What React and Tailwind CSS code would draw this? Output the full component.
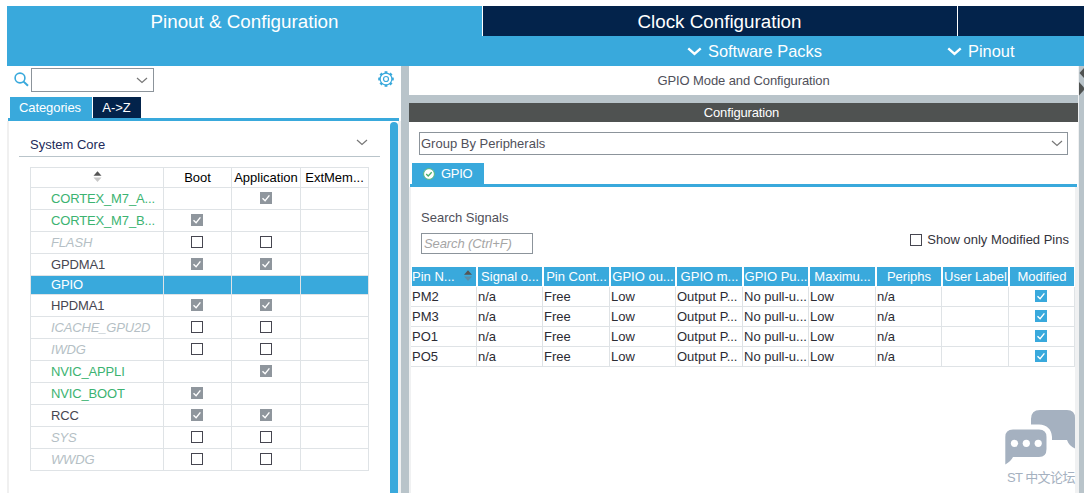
import clsx from "clsx";

const modules = [
  { name: "CORTEX_M7_A...", tone: "active", boot: null, app: true },
  { name: "CORTEX_M7_B...", tone: "active", boot: true, app: null },
  { name: "FLASH", tone: "disabled", boot: false, app: false },
  { name: "GPDMA1", tone: "normal", boot: true, app: true },
  { name: "GPIO", tone: "selected", boot: null, app: null },
  { name: "HPDMA1", tone: "normal", boot: true, app: true },
  { name: "ICACHE_GPU2D", tone: "disabled", boot: false, app: false },
  { name: "IWDG", tone: "disabled", boot: false, app: false },
  { name: "NVIC_APPLI", tone: "active", boot: null, app: true },
  { name: "NVIC_BOOT", tone: "active", boot: true, app: null },
  { name: "RCC", tone: "normal", boot: true, app: true },
  { name: "SYS", tone: "disabled", boot: false, app: false },
  { name: "WWDG", tone: "disabled", boot: false, app: false },
];

const tones = {
  active: "text-[#3cb371]",
  disabled: "text-[#b5bfc5] italic",
  normal: "text-[#464650]",
  selected: "text-white",
};

const pinColumns = [
  "Pin N...",
  "Signal o...",
  "Pin Cont...",
  "GPIO ou...",
  "GPIO m...",
  "GPIO Pu...",
  "Maximu...",
  "Periphs",
  "User Label",
  "Modified",
];

const pins = ["PM2", "PM3", "PO1", "PO5"];

const pinGrid =
  "grid grid-cols-[66px_66px_67px_66px_67px_66px_67px_66px_67px_66px]";
const moduleGrid = "grid grid-cols-[133px_68px_69px_68px]";

function Chevron({ className, strokeWidth = 1.2 }) {
  return (
    <svg
      viewBox="0 0 12 7"
      className={className}
      fill="none"
      stroke="currentColor"
      strokeWidth={strokeWidth}
    >
      <path d="M1 1l5 4.5L11 1" />
    </svg>
  );
}

function Check({ checked, className = "bg-[#8f969d]" }) {
  if (checked === null) return null;
  if (!checked) {
    return <span className="block size-3 border border-[#464650] bg-white" />;
  }
  return (
    <span className={clsx("block size-3", className)}>
      <svg viewBox="0 0 12 12" className="size-3" fill="none" stroke="#fff" strokeWidth="1.4">
        <path d="M2.5 6.2l2.6 2.5L9.4 3.4" />
      </svg>
    </span>
  );
}

function SortArrows({ className, lower = "#c8c8c8" }) {
  return (
    <svg viewBox="0 0 8 11" className={className}>
      <path d="M0 4.8L4 0.3L8 4.8z" fill="#555" />
      <path d="M0 6.5L4 11L8 6.5z" fill={lower} />
    </svg>
  );
}

function SearchIcon() {
  return (
    <svg viewBox="0 0 15 15" className="size-[15px]" fill="none" stroke="#39a9dc">
      <circle cx="6" cy="6" r="4.9" strokeWidth="1.6" />
      <path d="M9.6 9.6L14 13.8" strokeWidth="2" />
    </svg>
  );
}

function GearIcon() {
  const teeth = [0, 45, 90, 135, 180, 225, 270, 315];
  return (
    <svg viewBox="0 0 16 16" className="size-4" fill="none" stroke="#39a9dc">
      <circle cx="8" cy="8" r="5.9" strokeWidth="1.2" />
      <circle cx="8" cy="8" r="2.5" strokeWidth="1.2" />
      {teeth.map((deg) => (
        <path
          key={deg}
          d="M8 2.2V0.2"
          strokeWidth="2.8"
          transform={`rotate(${deg} 8 8)`}
        />
      ))}
    </svg>
  );
}

function Header() {
  return (
    <header className="ml-[7px] mt-[6px] bg-[#39a9dc] text-white">
      <div className="flex h-[30px] text-[18.8px] leading-[31px]">
        <div className="w-[475px] text-center">Pinout &amp; Configuration</div>
        <div className="w-[475px] border-l border-white bg-[#03234b] pr-px text-center">
          Clock Configuration
        </div>
        <div className="flex-1 border-l border-white bg-[#03234b]" />
      </div>
      <div className="flex h-[30px] items-center text-[16.4px] leading-[30px]">
        <div className="ml-[680px] flex w-[260px] items-center">
          <Chevron className="mr-[6px] h-[9px] w-[15px]" strokeWidth={1.9} />
          Software Packs
        </div>
        <div className="flex items-center">
          <Chevron className="mr-[6px] h-[9px] w-[15px]" strokeWidth={1.9} />
          Pinout
        </div>
      </div>
    </header>
  );
}

function Sidebar() {
  return (
    <aside className="flex w-[401px] flex-col">
      <div className="flex h-[31px] items-start pl-[14px] pt-[2px]">
        <div className="w-[17px] pt-1">
          <SearchIcon />
        </div>
        <div className="flex h-6 w-[123px] items-center justify-end border border-[#8c949b] pr-[5px] text-[#777]">
          <Chevron className="h-[7px] w-3" />
        </div>
        <div className="ml-[224px] pt-[3px]">
          <GearIcon />
        </div>
      </div>
      <div className="flex h-[21px] gap-px pl-[10px] leading-[21px] text-white">
        <div className="w-[82px] bg-[#39a9dc] pr-[2px] text-center tracking-[-0.1px]">
          Categories
        </div>
        <div className="w-12 bg-[#03234b] pr-px text-center">A-&gt;Z</div>
      </div>
      <div className="ml-2 mr-[2px] h-[3px] bg-[#39a9dc]" />
      <div className="ml-[7px] flex flex-1 border-l-2 border-[#f0f0f0]">
        <div className="ml-[10px] w-[361px]">
          <div className="flex h-[36px] items-start justify-between border-b border-[#b9c4ca] pl-[11px] pr-3 pt-[14px] leading-[19px] text-[#212a5a]">
            System Core
            <Chevron className="mt-1 h-[7px] w-3 text-[#777]" />
          </div>
          <div className="ml-[11px] mt-[10px] w-[339px] border-l border-t border-[#dfe3e6]">
            <div className={clsx(moduleGrid, "h-5 leading-[19px] text-black")}>
              <div className="flex justify-center border-b border-r border-[#dfe3e6] pt-[3px]">
                <SortArrows className="h-[11px] w-[9px]" />
              </div>
              {["Boot", "Application", "ExtMem..."].map((label) => (
                <div
                  key={label}
                  className="whitespace-nowrap border-b border-r border-[#dfe3e6] text-center"
                >
                  {label}
                </div>
              ))}
            </div>
            {modules.map((mod) => (
              <div
                key={mod.name}
                className={clsx(
                  moduleGrid,
                  tones[mod.tone],
                  mod.tone === "selected"
                    ? "h-[19px] bg-[#39a9dc] leading-[18px]"
                    : "h-[22px] leading-[21px]"
                )}
              >
                <div className="whitespace-nowrap border-b border-r border-[#dfe3e6] pl-5 tracking-[-0.15px]">
                  {mod.name}
                </div>
                <div className="flex items-center justify-center border-b border-r border-[#dfe3e6] pb-px pr-px">
                  <Check checked={mod.boot} />
                </div>
                <div className="flex items-center justify-center border-b border-r border-[#dfe3e6] pb-px">
                  <Check checked={mod.app} />
                </div>
                <div className="border-b border-r border-[#dfe3e6]" />
              </div>
            ))}
          </div>
        </div>
        <div className="ml-[10px] mt-px w-2 rounded-t-full bg-[#39a9dc]" />
        <div className="flex-1 bg-[#f0f1f2]" />
      </div>
    </aside>
  );
}

function PinTable() {
  return (
    <div className="mt-3 w-[664px]">
      <div className={clsx(pinGrid, "h-5 text-white")}>
        {pinColumns.map((label, i) => (
          <div
            key={label}
            className={clsx(
              "mr-px ml-px flex h-[19px] whitespace-nowrap bg-[#39a9dc] leading-[19px]",
              i === 0 ? "justify-between pr-1" : "justify-center"
            )}
          >
            {label}
            {i === 0 && (
              <SortArrows className="mt-[3px] h-[11px] w-2" lower="#5b8ea8" />
            )}
          </div>
        ))}
      </div>
      {pins.map((pin) => (
        <div key={pin} className={clsx(pinGrid, "h-5 text-[#2b2b33]")}>
          {[pin, "n/a", "Free", "Low", "Output P...", "No pull-u...", "Low", "n/a", ""].map(
            (value, i) => (
              <div
                key={i}
                className="whitespace-nowrap border-b border-r border-[#dfe3e6] pl-px leading-[19px]"
              >
                {value}
              </div>
            )
          )}
          <div className="flex items-center justify-center border-b border-r border-[#dfe3e6] pb-px pr-px">
            <Check checked className="bg-[#39a9dc]" />
          </div>
        </div>
      ))}
    </div>
  );
}

function ForumMark() {
  return (
    <div className="absolute left-[1003px] top-[408px] w-[76px] text-[#a5b1c0]">
      <svg viewBox="0 0 76 60" className="h-[60px] w-[76px]" fill="currentColor">
        <path d="M37 2H64Q72 2 72 10V40.5Q66 38 64 32H49V29Q48 17 36 16.5H28V11Q28 2 37 2z" />
        <path d="M10 21.5H36Q43.5 21.5 43.5 29V41Q43.5 49 36 49H10Q8 53 2.3 56.5V29Q2.3 21.5 10 21.5z" />
        <circle cx="11.5" cy="35.3" r="3.6" fill="#fff" />
        <circle cx="23.3" cy="35.3" r="3.6" fill="#fff" />
        <circle cx="35.2" cy="35.3" r="3.6" fill="#fff" />
      </svg>
      <div className="whitespace-nowrap pl-1 text-[13px] leading-[20px] tracking-[-0.6px]">
        ST 中文论坛
      </div>
    </div>
  );
}

function ConfigPanel() {
  return (
    <main className="flex w-[669px] flex-col">
      <div className="h-[29px] text-center leading-[29px] tracking-[-0.1px] text-[#50505a]">
        GPIO Mode and Configuration
      </div>
      <div className="h-2 bg-[#b9c4ca]" />
      <div className="h-[19px] bg-[#4f5251] pr-[4px] text-center leading-[19px] tracking-[-0.15px] text-white">
        Configuration
      </div>
      <div className="mx-[10px] mt-[10px] flex h-[23px] items-center justify-between border border-[#8c949b] pl-px pr-1 text-[#50505a]">
        Group By Peripherals
        <Chevron className="h-[7px] w-3 text-[#777]" />
      </div>
      <div className="ml-[3px] mt-2 flex h-[21px] w-[72px] items-center bg-[#39a9dc] pl-[11px] tracking-[-0.3px] text-white">
        <svg viewBox="0 0 12 12" className="mr-[6px] size-3">
          <circle cx="6" cy="6" r="5.4" fill="#fff" stroke="#5cb87c" />
          <path d="M3.2 6l2 2L8.7 4.2" fill="none" stroke="#49ae6c" strokeWidth="1.3" />
        </svg>
        GPIO
      </div>
      <div className="ml-px mr-px h-[3px] bg-[#39a9dc]" />
      <div className="flex flex-1 border-l-2 border-r-3 border-[#f0f1f2]">
        <div className="w-[664px] shrink-0">
          <div className="flex h-[68px] justify-between pl-[10px] pr-[6px]">
            <div className="pt-[21px]">
              <div className="leading-[19px] text-[#50505a]">Search Signals</div>
              <div className="mt-[6px] h-[21px] w-28 border border-[#8c949b] pl-[2px] italic leading-[19px] tracking-[-0.1px] text-[#a5a5a5]">
                Search (Ctrl+F)
              </div>
            </div>
            <div className="mt-[47px] flex h-3 items-center gap-[5px] text-[#33333b]">
              <Check checked={false} />
              <span className="whitespace-nowrap">Show only Modified Pins</span>
            </div>
          </div>
          <PinTable />
        </div>
      </div>
    </main>
  );
}

export default function App() {
  return (
    <div className="relative flex h-[493px] w-[1084px] flex-col overflow-hidden bg-white font-['Liberation_Sans','Noto_Sans_CJK_SC',sans-serif]">
      <Header />
      <div className="flex flex-1 text-[13px]">
        <Sidebar />
        <div className="w-2 bg-[#b9c4ca]" />
        <ConfigPanel />
        <div className="w-[6px] border-l border-[#f0f1f2] bg-[#b9c4ca]">
          <svg viewBox="0 0 5 30" className="h-[30px] w-[5px]" fill="#4f5251">
            <path d="M5 2L0.5 7L5 12z" />
            <path d="M0 16L5 21.5V24L0 29.5z" />
          </svg>
        </div>
      </div>
      <ForumMark />
    </div>
  );
}
